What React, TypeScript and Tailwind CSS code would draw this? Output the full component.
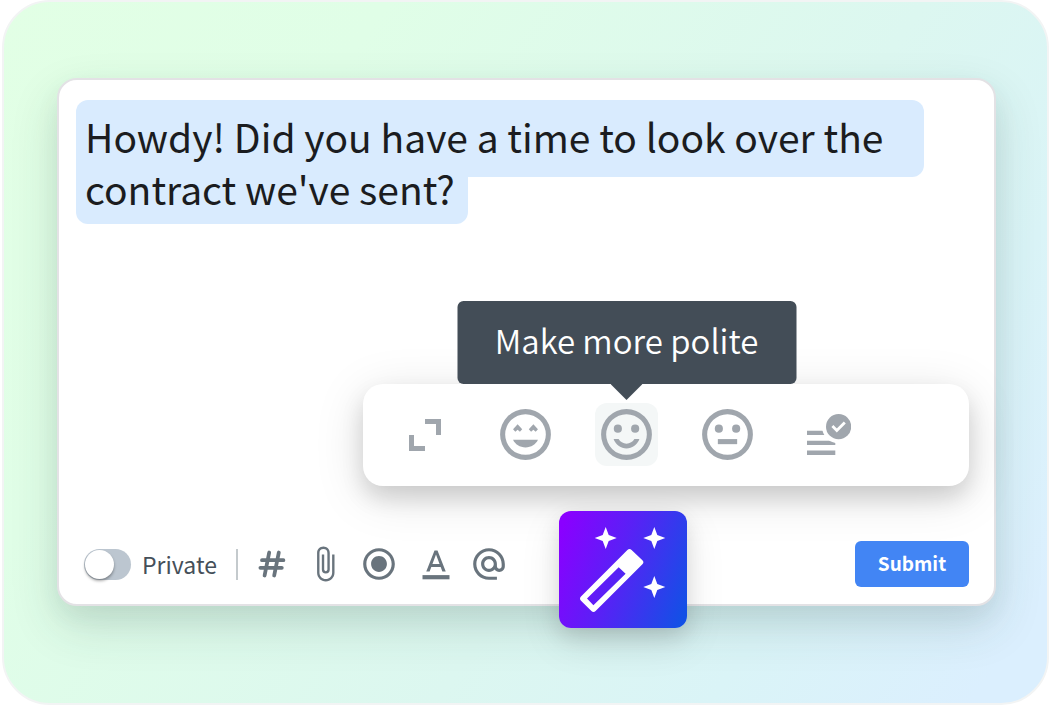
import type { ReactNode } from "react";
import { MdAlternateEmail, MdAttachFile, MdRadioButtonChecked } from "react-icons/md";

const RING =
  "M12 2a10 10 0 1 0 0 20a10 10 0 1 0 0-20zM12 4a8 8 0 1 1 0 16a8 8 0 1 1 0-16z";

function Face({ children }: { children: ReactNode }) {
  return (
    <svg viewBox="0 0 24 24" className="size-[61px]" fill="currentColor" aria-hidden="true">
      <path fillRule="evenodd" d={RING} />
      {children}
    </svg>
  );
}

function ExpandIcon() {
  return (
    <svg viewBox="0 0 32 32" className="size-8" fill="currentColor" aria-hidden="true">
      <path d="M16 0H32V16H27V5H16ZM0 16H5V27H16V32H0Z" />
    </svg>
  );
}

function HappyIcon() {
  return (
    <Face>
      <path d="M8.9 8L10.7 9.9L9.8 10.9L8.9 10.1L8 10.9L7.1 9.9ZM15.1 8L16.9 9.9L16 10.9L15.1 10.1L14.2 10.9L13.3 9.9Z" />
      <path d="M7.1 14.1H16.9C16.1 15.9 14.2 17.1 12 17.1S7.9 15.9 7.1 14.1Z" />
    </Face>
  );
}

function SmileIcon() {
  return (
    <Face>
      <circle cx="8.6" cy="9.7" r="1.6" />
      <circle cx="15.4" cy="9.7" r="1.6" />
      <path d="M12 17.5C9.8 17.5 7.9 16.1 7 14.1V13.8H8.9C9.5 14.9 10.7 15.6 12 15.6S14.5 14.9 15.1 13.8H17V14.1C16.1 16.1 14.2 17.5 12 17.5Z" />
    </Face>
  );
}

function NeutralIcon() {
  return (
    <Face>
      <circle cx="8.6" cy="9.7" r="1.6" />
      <circle cx="15.4" cy="9.7" r="1.6" />
      <path d="M8.2 13.8H15.8V15.8H8.2Z" />
    </Face>
  );
}

function ProofreadIcon() {
  return (
    <svg viewBox="0 0 44 41" className="h-[41px] w-11" aria-hidden="true">
      <path fill="currentColor" d="M0 16.7H28.3V21H0ZM0 26.7H28.3V31H0ZM0 36.5H28.3V41H0Z" />
      <circle cx="31.6" cy="12.7" r="16.6" fill="#fff" />
      <circle cx="31.6" cy="12.7" r="12.6" fill="currentColor" />
      <path d="M25.4 12L29.8 16.4L37.8 8.4" fill="none" stroke="#fff" strokeWidth="2.8" />
    </svg>
  );
}

function HashIcon() {
  return (
    <svg
      viewBox="0 0 28 28"
      className="size-7"
      fill="none"
      stroke="currentColor"
      strokeWidth="3.8"
      strokeLinecap="round"
      aria-hidden="true"
    >
      <path d="M11.2 2.5L6.6 25.5M20.8 2.5L16.2 25.5M4 10.2H25.4M2.4 17.8H23.8" />
    </svg>
  );
}

function TextColorIcon() {
  return (
    <svg viewBox="0 0 24 24" className="size-9" fill="currentColor" aria-hidden="true">
      <path d="M11 3L5.5 17h2.25l1.12-3h6.25l1.12 3h2.25L13 3h-2zm-1.38 9L12 5.67 14.38 12H9.62z" />
      <path d="M3 19.4h18v2.8H3z" />
    </svg>
  );
}

function WandIcon() {
  return (
    <svg viewBox="0 0 128 117" className="block h-full w-full" fill="#fff" aria-hidden="true">
      <path
        fillRule="evenodd"
        d="M68.4 38.9Q70.5 37 72.6 38.9L83.4 49.2Q85.4 51.2 83.4 53.2L36.6 100Q34.5 102 32.4 100L22 89.8Q20 87.7 22 85.6ZM59.7 56.3L28 87.5L34.4 94.2L66.6 62.7Z"
      />
      <path d="M46.7 16L49.7 24L57.7 27L49.7 30L46.7 38L43.7 30L35.7 27L43.7 24Z" />
      <path d="M95.3 16L98.3 24L106.3 27L98.3 30L95.3 38L92.3 30L84.3 27L92.3 24Z" />
      <path d="M95.3 65L98.3 73L106.3 76L98.3 79L95.3 87L92.3 79L84.3 76L92.3 73Z" />
    </svg>
  );
}

function ToneButton({ label, children }: { label: string; children: ReactNode }) {
  return (
    <button
      type="button"
      aria-label={label}
      className="flex size-[63px] items-center justify-center rounded-xl"
    >
      {children}
    </button>
  );
}

function TonePalette() {
  return (
    <div
      role="toolbar"
      aria-label="Rewrite"
      className="ml-auto flex w-[606px] max-w-full gap-[38px] rounded-[20px] bg-white px-[30px] pt-[19px] pb-5 text-[#a0a6ad] shadow-[0_10px_50px_rgba(0,0,0,0.13),0_12px_22px_rgba(0,0,0,0.13)]"
    >
      <ToneButton label="Expand">
        <ExpandIcon />
      </ToneButton>
      <ToneButton label="Make more friendly">
        <HappyIcon />
      </ToneButton>
      <div className="relative">
        <button
          type="button"
          aria-describedby="tone-tip"
          aria-label="Polite"
          className="flex size-[63px] items-center justify-center rounded-xl bg-[#f4f7f7]"
        >
          <SmileIcon />
        </button>
        <div
          id="tone-tip"
          role="tooltip"
          className="absolute bottom-[82px] left-1/2 flex h-[83px] w-[339px] -translate-x-1/2 items-center justify-center rounded-md bg-[#434d57] pb-1.5 text-[33px] leading-[52px] font-[350] whitespace-nowrap text-white"
        >
          Make more polite
          <svg
            viewBox="0 0 32 16"
            className="absolute top-full left-1/2 h-4 w-8 -translate-x-1/2"
            fill="#434d57"
            aria-hidden="true"
          >
            <path d="M0 0H32L16 16Z" />
          </svg>
        </div>
      </div>
      <ToneButton label="Make neutral">
        <NeutralIcon />
      </ToneButton>
      <ToneButton label="Fix spelling">
        <ProofreadIcon />
      </ToneButton>
    </div>
  );
}

function ComposerToolbar() {
  return (
    <div className="mt-[55px] flex h-[46px] items-center pl-2 text-[#69747d]">
      <label className="flex items-center gap-[11px] text-[23px] leading-8 text-[#454f59]">
        <input
          type="checkbox"
          className="h-[31px] w-[47px] appearance-none rounded-full bg-[#bcc6d0] before:m-px before:block before:size-[29px] before:rounded-full before:bg-white before:shadow-[0_2px_3px_rgba(0,0,0,0.35)] before:content-['']"
        />
        Private
      </label>
      <span className="ml-[19px] h-[31px] w-0.5 bg-[#c4cacd]" />
      <button type="button" aria-label="Tag" className="ml-5">
        <HashIcon />
      </button>
      <button type="button" aria-label="Attach file" className="ml-5">
        <MdAttachFile size={38} />
      </button>
      <button type="button" aria-label="Record" className="ml-4">
        <MdRadioButtonChecked size={38} />
      </button>
      <button type="button" aria-label="Text colour" className="ml-5">
        <TextColorIcon />
      </button>
      <button type="button" aria-label="Mention" className="ml-4">
        <MdAlternateEmail size={38} />
      </button>
      <button
        type="button"
        className="ml-auto h-[46px] w-[114px] rounded-md bg-[#4285f4] pb-0.5 text-[19px] leading-8 font-bold text-white"
      >
        Submit
      </button>
    </div>
  );
}

export default function App() {
  return (
    <main className="bg-white pb-0.5 pl-0.5 font-['Noto_Sans_CJK_SC','Noto_Sans',sans-serif]">
      <div className="rounded-[48px] border-2 border-[#f2f4f4] bg-[linear-gradient(125deg,#e2ffe5_0%,#e0fee7_25%,#dcf7f0_60%,#daf4f7_78%,#dbeffe_95%)] pt-[76px] pr-[51px] pb-[97px] pl-[53px]">
        <section className="relative rounded-[20px] border-2 border-[#e3e2e5] bg-white pt-5 pr-[25px] pb-[17px] pl-[17px] shadow-[0_20px_48px_rgba(40,70,60,0.16),0_10px_24px_rgba(40,70,60,0.06)]">
          <div
            role="textbox"
            aria-label="Message"
            aria-multiline="true"
            className="min-h-[284px] text-[39px] leading-[52px] text-[#1b1c20]"
          >
            <p>
              <span className="block w-[848px] max-w-full rounded-t-xl rounded-br-xl bg-[#d9ebfe] pt-[10px] pb-[15px] pl-[9px]">
                Howdy! Did you have a time to look over the
              </span>
              <span className="-mt-[15px] block w-[392px] rounded-b-xl bg-[#d9ebfe] pb-[10px] pl-[9px]">
                contract we've sent?
              </span>
            </p>
          </div>
          <TonePalette />
          <ComposerToolbar />
          <button
            type="button"
            aria-label="Rewrite with AI"
            className="absolute -bottom-6 left-[500px] h-[117px] w-32 rounded-xl bg-[linear-gradient(110deg,#8a00ff_5%,#5a20f6_45%,#1350e6_95%)] shadow-[0_14px_40px_rgba(0,0,0,0.1),0_8px_20px_rgba(0,0,0,0.1)]"
          >
            <WandIcon />
          </button>
        </section>
      </div>
    </main>
  );
}
